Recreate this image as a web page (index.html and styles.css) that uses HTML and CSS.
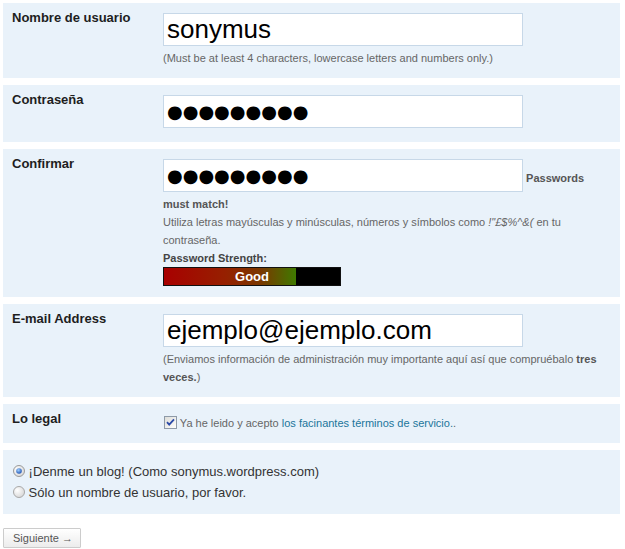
FILE: index.html
```html
<!DOCTYPE html>
<html lang="es">
<head>
<meta charset="utf-8">
<title>Registro</title>
<link rel="stylesheet" href="styles.css">
</head>
<body>
<form class="signup">
  <div class="row">
    <label class="row-label">Nombre de usuario</label>
    <div class="row-body">
      <div class="field">sonymus</div>
      <p class="hint">(Must be at least 4 characters, lowercase letters and numbers only.)</p>
    </div>
  </div>

  <div class="row">
    <label class="row-label">Contraseña</label>
    <div class="row-body">
      <div class="field field-pass">●●●●●●●●●</div>
    </div>
  </div>

  <div class="row">
    <label class="row-label">Confirmar</label>
    <div class="row-body">
      <div class="field field-pass">●●●●●●●●●</div> <strong class="match">Passwords must match!</strong>
      <p class="hint">Utiliza letras mayúsculas y minúsculas, números y símbolos como <em>!"£$%^&amp;(</em> en tu contraseña.</p>
      <p class="strength-title">Password Strength:</p>
      <div class="meter"><span class="meter-text">Good</span></div>
    </div>
  </div>

  <div class="row">
    <label class="row-label">E-mail Address</label>
    <div class="row-body">
      <div class="field">ejemplo@ejemplo.com</div>
      <p class="hint">(Enviamos información de administración muy importante aquí así que compruébalo <strong class="em">tres veces.</strong>)</p>
    </div>
  </div>

  <div class="row">
    <label class="row-label">Lo legal</label>
    <div class="row-body">
      <label class="check"><svg class="cb" width="13" height="13" viewBox="0 0 13 13"><defs><linearGradient id="cbg" x1="0" y1="0" x2="1" y2="1"><stop offset="0" stop-color="#dcdcd7"/><stop offset="1" stop-color="#ffffff"/></linearGradient></defs><rect x="0.5" y="0.5" width="12" height="12" fill="url(#cbg)" stroke="#8e9aa8"/><path d="M3 6.2 L5.2 8.6 L10 3.4" fill="none" stroke="#2b4aa8" stroke-width="1.8"/></svg> Ya he leido y acepto <a href="#" class="tos">los facinantes términos de servicio.</a>.</label>
    </div>
  </div>

  <div class="row row-plain">
    <label class="radio"><svg class="rd" width="12" height="12" viewBox="0 0 12 12"><defs><radialGradient id="rbg" cx="0.35" cy="0.35" r="0.8"><stop offset="0" stop-color="#ffffff"/><stop offset="1" stop-color="#d2d2d2"/></radialGradient><radialGradient id="rdot" cx="0.4" cy="0.35" r="0.7"><stop offset="0" stop-color="#9fd0ff"/><stop offset="1" stop-color="#1b4fb0"/></radialGradient></defs><circle cx="6" cy="6" r="5.5" fill="url(#rbg)" stroke="#9a9a9a"/><circle cx="6" cy="6" r="2.8" fill="url(#rdot)"/></svg> ¡Denme un blog! (Como sonymus.wordpress.com)</label>
    <label class="radio"><svg class="rd" width="12" height="12" viewBox="0 0 12 12"><circle cx="6" cy="6" r="5.5" fill="url(#rbg)" stroke="#a8a8a8"/></svg> Sólo un nombre de usuario, por favor.</label>
  </div>

  <button type="button" class="btn">Siguiente →</button>
</form>
</body>
</html>
```

FILE: styles.css
```css
html, body {
  margin: 0;
  background: #ffffff;
}

body {
  padding: 3px 5px 0 3px;
  font-family: "Liberation Sans", Arial, sans-serif;
}

.signup {
  margin: 0;
}

.row {
  display: grid;
  grid-template-columns: 151px 440px;
  background: #e9f2fa;
  padding: 7px 9px 11px;
  margin-bottom: 7px;
}

.row-label {
  font-size: 13px;
  font-weight: bold;
  line-height: 15px;
  color: #1e1e1e;
}

.row-body {
  padding-top: 3px;
  font-size: 11px;
  line-height: 18px;
  color: #666666;
}

.field {
  display: inline-block;
  vertical-align: baseline;
  box-sizing: border-box;
  width: 360px;
  height: 33px;
  margin-bottom: 3px;
  padding: 0 3px;
  border: 1px solid #c7d8e8;
  background: #ffffff;
  font-size: 26px;
  line-height: 31px;
  color: #000000;
  white-space: nowrap;
}

.field-pass {
  font-family: "DejaVu Sans", sans-serif;
  font-size: 18px;
  letter-spacing: 0;
}

.hint {
  margin: 0;
}

.hint em {
  font-style: italic;
}

.match {
  color: #555555;
  font-weight: bold;
}

.em {
  color: #555555;
  font-weight: bold;
}

.strength-title {
  margin: 0;
  font-weight: bold;
  color: #444444;
}

.meter {
  box-sizing: border-box;
  width: 178px;
  height: 19px;
  border: 1px solid #111111;
  background: linear-gradient(to right, #a80000 0%, #962000 35%, #7a3800 55%, #3f7a00 75%, #000000 75%, #000000 100%);
  text-align: center;
}

.meter-text {
  display: block;
  font-size: 13px;
  font-weight: bold;
  line-height: 17px;
  color: #ffffff;
}

.check {
  color: #666666;
}

.cb {
  vertical-align: -2px;
  margin-left: 1px;
}

.tos {
  color: #21759b;
  text-decoration: none;
}

.row-plain {
  display: block;
  padding: 11px 9px 11px;
}

.radio {
  display: block;
  font-size: 13px;
  line-height: 21px;
  color: #333333;
}

.rd {
  vertical-align: -1px;
  margin-left: 1px;
}

.btn {
  margin-top: 7px;
  box-sizing: border-box;
  width: 78px;
  height: 20px;
  padding: 0 0 0 9px;
  border: 1px solid #cccccc;
  border-radius: 1px;
  background: linear-gradient(#ffffff, #ececec);
  font-family: "Liberation Sans", Arial, sans-serif;
  font-size: 11px;
  line-height: 18px;
  color: #555555;
  text-align: left;
}
```
